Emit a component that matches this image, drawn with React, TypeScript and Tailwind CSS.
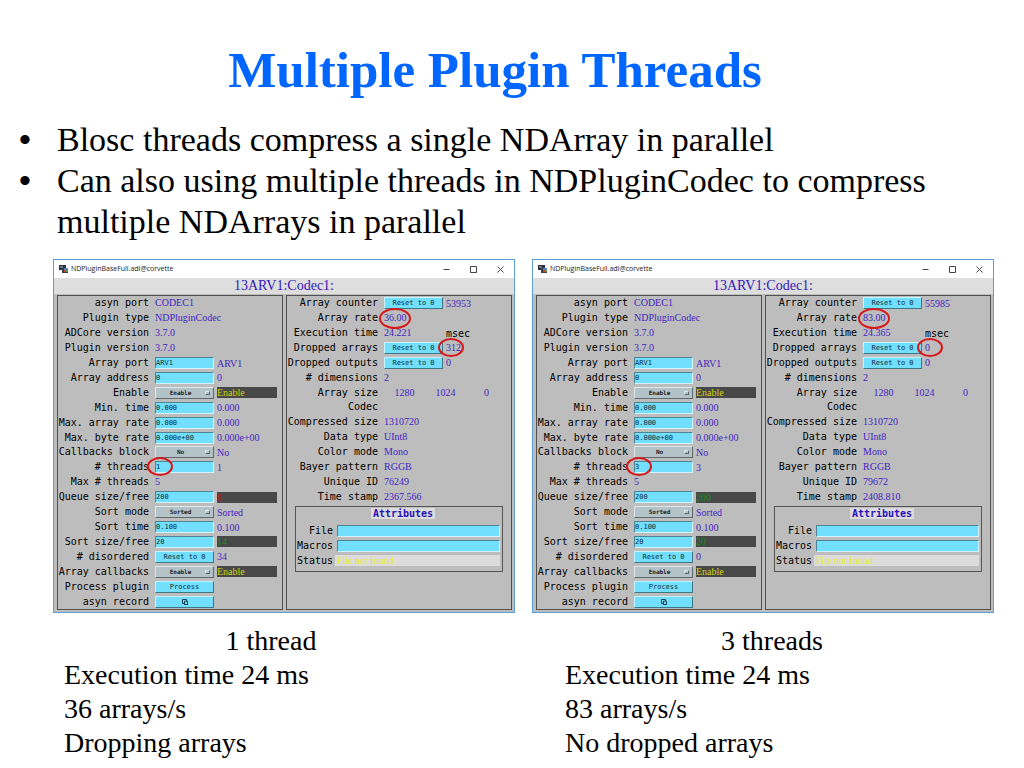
import React, { useId } from 'react';
import clsx from 'clsx';

type Kind = 'text' | 'input' | 'menu' | 'button' | 'icon' | 'sizes';
type Tone = 'plain' | 'yellow' | 'red' | 'green' | 'unit';

interface RowData {
  label: string;
  kind: Kind;
  field?: string;
  value?: string;
  tone?: Tone;
  mark?: 'field' | 'rate' | 'value';
}

interface PluginData {
  threads: string;
  queueFree: string;
  queueTone: Tone;
  sortFree: string;
  disordered: string;
  counter: string;
  rate: string;
  execTime: string;
  dropped: string;
  uniqueId: string;
  timeStamp: string;
}

const MONO = "font-['DejaVu_Sans_Mono',monospace]";
const SERIF = "font-['Liberation_Serif',serif]";

const toneClass: Record<Tone, string> = {
  plain: 'text-[#4326c4]',
  yellow: 'bg-[#484848] text-[#d2d20a]',
  red: 'bg-[#484848] text-[#d01010]',
  green: 'bg-[#484848] text-[#14911c]',
  unit: 'text-black',
};

const leftRows = (d: PluginData): RowData[] => [
  { label: 'asyn port', kind: 'text', field: 'CODEC1' },
  { label: 'Plugin type', kind: 'text', field: 'NDPluginCodec' },
  { label: 'ADCore version', kind: 'text', field: '3.7.0' },
  { label: 'Plugin version', kind: 'text', field: '3.7.0' },
  { label: 'Array port', kind: 'input', field: 'ARV1', value: 'ARV1' },
  { label: 'Array address', kind: 'input', field: '0', value: '0' },
  { label: 'Enable', kind: 'menu', field: 'Enable', value: 'Enable', tone: 'yellow' },
  { label: 'Min. time', kind: 'input', field: '0.000', value: '0.000' },
  { label: 'Max. array rate', kind: 'input', field: '0.000', value: '0.000' },
  { label: 'Max. byte rate', kind: 'input', field: '0.000e+00', value: '0.000e+00' },
  { label: 'Callbacks block', kind: 'menu', field: 'No', value: 'No' },
  { label: '# threads', kind: 'input', field: d.threads, value: d.threads, mark: 'field' },
  { label: 'Max # threads', kind: 'text', field: '5' },
  { label: 'Queue size/free', kind: 'input', field: '200', value: d.queueFree, tone: d.queueTone },
  { label: 'Sort mode', kind: 'menu', field: 'Sorted', value: 'Sorted' },
  { label: 'Sort time', kind: 'input', field: '0.100', value: '0.100' },
  { label: 'Sort size/free', kind: 'input', field: '20', value: d.sortFree, tone: 'green' },
  { label: '# disordered', kind: 'button', field: 'Reset to 0', value: d.disordered },
  { label: 'Array callbacks', kind: 'menu', field: 'Enable', value: 'Enable', tone: 'yellow' },
  { label: 'Process plugin', kind: 'button', field: 'Process' },
  { label: 'asyn record', kind: 'icon' },
];

const rightRows = (d: PluginData): RowData[] => [
  { label: 'Array counter', kind: 'button', field: 'Reset to 0', value: d.counter },
  { label: 'Array rate', kind: 'text', field: d.rate, mark: 'rate' },
  { label: 'Execution time', kind: 'text', field: d.execTime, value: 'msec', tone: 'unit' },
  { label: 'Dropped arrays', kind: 'button', field: 'Reset to 0', value: d.dropped, mark: 'value' },
  { label: 'Dropped outputs', kind: 'button', field: 'Reset to 0', value: '0' },
  { label: '# dimensions', kind: 'text', field: '2' },
  { label: 'Array size', kind: 'sizes' },
  { label: 'Codec', kind: 'text' },
  { label: 'Compressed size', kind: 'text', field: '1310720' },
  { label: 'Data type', kind: 'text', field: 'UInt8' },
  { label: 'Color mode', kind: 'text', field: 'Mono' },
  { label: 'Bayer pattern', kind: 'text', field: 'RGGB' },
  { label: 'Unique ID', kind: 'text', field: d.uniqueId },
  { label: 'Time stamp', kind: 'text', field: d.timeStamp },
];

const oneThread: PluginData = {
  threads: '1',
  queueFree: '0',
  queueTone: 'red',
  sortFree: '14',
  disordered: '34',
  counter: '53953',
  rate: '36.00',
  execTime: '24.221',
  dropped: '312',
  uniqueId: '76249',
  timeStamp: '2367.566',
};

const threeThreads: PluginData = {
  threads: '3',
  queueFree: '200',
  queueTone: 'green',
  sortFree: '20',
  disordered: '0',
  counter: '55985',
  rate: '83.00',
  execTime: '24.365',
  dropped: '0',
  uniqueId: '79672',
  timeStamp: '2408.810',
};

const sunken = 'border border-t-[#4f8592] border-l-[#4f8592] border-b-[#d5f3fa] border-r-[#d5f3fa] bg-[#73dfff]';
const raised = 'border border-t-[#c5f2fc] border-l-[#c5f2fc] border-b-[#3f7784] border-r-[#3f7784] bg-[#73dfff]';

const Field: React.FC<{ row: RowData; id: string }> = ({ row, id }) => {
  switch (row.kind) {
    case 'input':
      return (
        <input
          id={id}
          defaultValue={row.field}
          className={clsx(sunken, MONO, 'block h-3 w-full text-[7px] leading-[10px] text-[#0c3038]')}
        />
      );
    case 'menu':
      return (
        <div className="relative">
          <select
            id={id}
            className={clsx(MONO, 'block h-3 w-full appearance-none border border-t-[#dfe7ea] border-l-[#dfe7ea] border-b-[#5f6a6e] border-r-[#5f6a6e] bg-[#b4c3c8] pr-2 text-center text-[6px] leading-[10px] font-bold text-[#222]')}
          >
            <option>{row.field}</option>
          </select>
          <span className="pointer-events-none absolute top-1 right-1 h-1 w-[5px] border border-t-[#dfe7ea] border-l-[#dfe7ea] border-b-[#56666b] border-r-[#56666b]" />
        </div>
      );
    case 'button':
      return (
        <button id={id} className={clsx(raised, MONO, 'block h-3 w-full text-center text-[7px] leading-[10px] text-[#0c3038]')}>
          {row.field}
        </button>
      );
    case 'icon':
      return (
        <button id={id} className={clsx(raised, 'flex h-3 w-full items-center justify-center')}>
          <svg viewBox="0 0 8 8" className="h-2 w-2" fill="none" stroke="#0c3038" strokeWidth="0.9">
            <path d="M3.5 5.5H1.5v-4h4v1.5" />
            <path d="M3.5 3.2h3v3.3h-3z" />
          </svg>
        </button>
      );
    default:
      return <output id={id} className={clsx(SERIF, 'block text-[10px] leading-3 whitespace-nowrap text-[#4326c4]')}>{row.field}</output>;
  }
};

const Ring: React.FC<{ className: string }> = ({ className }) => (
  <span className={clsx('pointer-events-none absolute z-10 rounded-[50%] border-2 border-[#d8191c]', className)} />
);

const Row: React.FC<{ row: RowData }> = ({ row }) => {
  const id = useId();
  return (
    <div className="flex items-center">
      <label htmlFor={id} className={clsx(MONO, 'mr-[6px] w-[91px] shrink-0 text-right text-[10px] leading-3 whitespace-nowrap text-black')}>
        {row.label}
      </label>
      {row.kind === 'sizes' ? (
        <output id={id} className={clsx(SERIF, 'grid w-[123px] grid-cols-3 text-center text-[10px] leading-3 text-[#4326c4]')}>
          <span>1280</span>
          <span>1024</span>
          <span>0</span>
        </output>
      ) : (
        <>
          <div className="relative mr-[3px] w-[59px] shrink-0">
            <Field row={row} id={id} />
            {row.mark === 'field' && <Ring className="-top-1 -left-2 h-[19px] w-[26px]" />}
            {row.mark === 'rate' && <Ring className="-top-1 -left-[5px] h-[21px] w-[32px]" />}
          </div>
          <div className="relative mr-[5px] min-w-0 flex-1">
            {row.value !== undefined && (
              <span
                className={clsx(
                  'block h-[11px] whitespace-nowrap text-[10px] leading-[11px]',
                  row.tone === 'unit' ? MONO : SERIF,
                  toneClass[row.tone ?? 'plain'],
                )}
              >
                {row.value}
              </span>
            )}
            {row.mark === 'value' && <Ring className="-top-1 -left-2 h-[19px] w-[26px]" />}
          </div>
        </>
      )}
    </div>
  );
};

const AttributeInput: React.FC<{ label: string }> = ({ label }) => {
  const id = useId();
  return (
    <div className="flex h-[15px] items-center">
      <label htmlFor={id} className="mr-1 w-[37px] shrink-0 text-right text-[10px] leading-3">{label}</label>
      <input id={id} className={clsx(sunken, 'mr-0.5 h-3 min-w-0 flex-1')} />
    </div>
  );
};

const Attributes: React.FC = () => (
  <section className={clsx(MONO, 'mx-2 mt-0.5 border border-[#555] pt-px pb-[3px]')}>
    <div className="mb-1 flex justify-center pl-2">
      <h3 className="h-[11px] bg-[#dcdcdc] px-0.5 text-[10px] leading-[11px] font-bold text-[#2a12b8]">Attributes</h3>
    </div>
    <AttributeInput label="File" />
    <AttributeInput label="Macros" />
    <div className="flex h-[15px] items-center">
      <span className="mr-0.5 w-[37px] shrink-0 text-right text-[10px] leading-3">Status</span>
      <span className={clsx(SERIF, 'mr-0.5 h-[11px] flex-1 bg-[#dcdcdc] pl-0.5 text-[10px] leading-[11px] text-[#e6ee2c]')}>File not found</span>
    </div>
  </section>
);

const TitleBar: React.FC = () => (
  <div className="flex h-[18px] items-center bg-white pr-[10px] pl-[5px]">
    <svg viewBox="0 0 10 8" className="mr-0.5 h-2 w-[10px]">
      <path d="M0 0h7v5H0z" fill="#2b3138" />
      <path d="M1 1h3v2H1z" fill="#64798a" />
      <path d="M3 3h6v5H3z" fill="#3a4046" />
      <path d="M5 3h4v2H5z" fill="#5b7fc0" />
      <path d="M5 5h2v2H5z" fill="#c8452d" />
      <path d="M7 5h2v2H7z" fill="#4f9a48" />
    </svg>
    <span className="font-['Open_Sans',sans-serif] text-[7px] leading-[10px] text-[#222]">NDPluginBaseFull.adl@corvette</span>
    <div className="ml-auto flex gap-5 text-[#444]">
      <button aria-label="Minimize">
        <svg viewBox="0 0 7 7" className="h-[7px] w-[7px]" stroke="currentColor"><path d="M0.5 3.5h6" /></svg>
      </button>
      <button aria-label="Maximize">
        <svg viewBox="0 0 7 7" className="h-[7px] w-[7px]" fill="none" stroke="currentColor"><path d="M0.5 0.5h6v6h-6z" /></svg>
      </button>
      <button aria-label="Close">
        <svg viewBox="0 0 7 7" className="h-[7px] w-[7px]" stroke="currentColor"><path d="M0.5 0.5l6 6M6.5 0.5l-6 6" /></svg>
      </button>
    </div>
  </div>
);

const PluginWindow: React.FC<{ data: PluginData }> = ({ data }) => (
  <article className="min-w-0 border border-[#5d9fd3] bg-[#bdbdbd]">
    <TitleBar />
    <h2 className={clsx(SERIF, 'bg-[#dedede] text-center text-[14px] leading-4 text-[#3517bd]')}>13ARV1:Codec1:</h2>
    <div className="grid grid-cols-2 gap-[3px] pt-px pr-0.5 pb-0.5 pl-[3px]">
      <div className="border border-[#505050]">
        <div className="grid h-[313px] auto-rows-fr">
          {leftRows(data).map((row) => <Row key={row.label} row={row} />)}
        </div>
      </div>
      <div className="border border-[#505050]">
        <div className="grid h-[208px] auto-rows-fr">
          {rightRows(data).map((row) => <Row key={row.label} row={row} />)}
        </div>
        <Attributes />
      </div>
    </div>
  </article>
);

const Caption: React.FC<{ title: string; lines: string[] }> = ({ title, lines }) => (
  <div>
    <p className="text-center">{title}</p>
    {lines.map((line) => <p key={line}>{line}</p>)}
  </div>
);

const Bullet: React.FC<{ children: React.ReactNode }> = ({ children }) => (
  <li className="flex">
    <span className="w-[38px] shrink-0 font-['Liberation_Sans',sans-serif]">•</span>
    <span>{children}</span>
  </li>
);

const App: React.FC = () => {
  return (
    <main className={clsx(SERIF, 'min-h-screen bg-white text-black')}>
      <h1 className="pt-10 pr-[34px] text-center text-[51px] leading-[60px] font-bold text-[#0066ff]">Multiple Plugin Threads</h1>
      <ul className="mt-[19px] pr-8 pl-[19px] text-[34px] leading-[41px]">
        <Bullet>Blosc threads compress a single NDArray in parallel</Bullet>
        <Bullet>Can also using multiple threads in NDPluginCodec to compress multiple NDArrays in parallel</Bullet>
      </ul>
      <div className="mt-[17px] grid grid-cols-2 gap-[17px] pr-[30px] pl-[53px]">
        <PluginWindow data={oneThread} />
        <PluginWindow data={threeThreads} />
      </div>
      <div className="mt-[11px] grid grid-cols-2 gap-[87px] pr-[45px] pl-16 text-[28px] leading-[34px]">
        <Caption title="1 thread" lines={['Execution time 24 ms', '36 arrays/s', 'Dropping arrays']} />
        <Caption title="3 threads" lines={['Execution time 24 ms', '83 arrays/s', 'No dropped arrays']} />
      </div>
    </main>
  );
};

export default App;
